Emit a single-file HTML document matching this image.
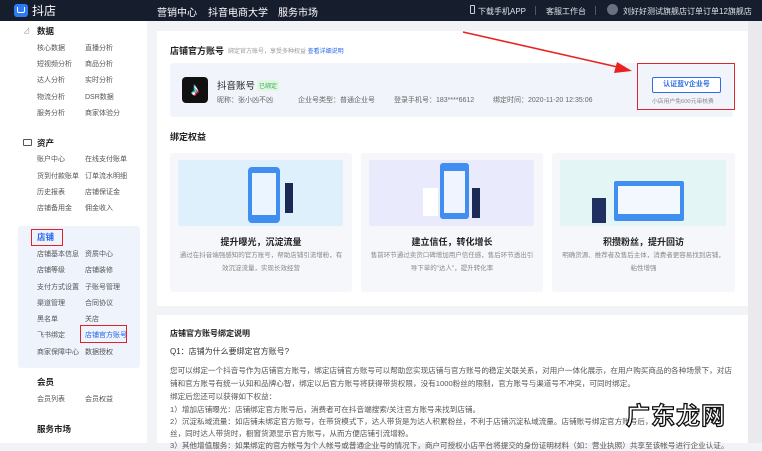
<!DOCTYPE html>
<html><head><meta charset="utf-8"><style>
*{margin:0;padding:0;box-sizing:border-box}
body{width:762px;height:443px;overflow:hidden;position:relative;background:#f2f3f6;font-family:"Liberation Sans","Noto Sans CJK SC",sans-serif;color:#333}
.a{position:absolute;white-space:nowrap}
.top{left:0;top:0;width:762px;height:21px;background:#161d2d}
.tw{color:#fff;font-size:10px;top:4px}
.tr{color:#dfe2ea;font-size:8px;top:6px}
.side{left:0;top:21px;width:147px;height:422px;background:#fff}
.si{font-size:7px;color:#555}
.sh{font-size:8.5px;font-weight:bold;color:#222}
.card{background:#fff}
.small{font-size:7px;color:#666}
.ben{background:#f6f7fa;border-radius:3px}
.img{border-radius:2px}
.bt{font-size:9px;font-weight:bold;color:#222;text-align:center;width:100%;left:0}
.bd{font-size:6.5px;color:#888;text-align:center;width:100%;left:0;line-height:13px;white-space:normal;padding:0 8px}
.tx{font-size:7.6px;color:#555}
</style></head><body>
<div class="a top"></div>
<div class="a" style="left:14px;top:4px;width:14px;height:13px;background:#2f7bf5;border-radius:3px"></div>
<div class="a" style="left:17px;top:7px;width:8px;height:6px;border:1.5px solid #fff;border-top:none;border-radius:0 0 2px 2px"></div>
<div class="a tw" style="left:32px;top:2px;font-size:12px">抖店</div>
<div class="a tw" style="left:157px">营销中心</div>
<div class="a tw" style="left:208px">抖音电商大学</div>
<div class="a tw" style="left:278px">服务市场</div>
<div class="a" style="left:470px;top:5px;width:5px;height:9px;border:1px solid #ccd;border-radius:1px"></div>
<div class="a tr" style="left:478px">下载手机APP</div>
<div class="a" style="left:535px;top:6px;width:1px;height:9px;background:#556"></div>
<div class="a tr" style="left:546px">客服工作台</div>
<div class="a" style="left:595px;top:6px;width:1px;height:9px;background:#556"></div>
<div class="a" style="left:607px;top:4px;width:11px;height:11px;border-radius:50%;background:#6a7080"></div>
<div class="a tr" style="left:623px">刘好好测试旗舰店订单订单12旗舰店</div>

<div class="a side"></div>
<div class="a" style="left:18px;top:226px;width:122px;height:142px;background:#eef3fc;border-radius:3px"></div>
<div class="a si" style="left:23px;top:26px;color:#999">⊿</div>
<div class="a sh" style="left:37px;top:25px">数据</div>
<div class="a si" style="left:37px;top:43px">核心数据</div><div class="a si" style="left:85px;top:43px">直播分析</div>
<div class="a si" style="left:37px;top:59px">短视频分析</div><div class="a si" style="left:85px;top:59px">商品分析</div>
<div class="a si" style="left:37px;top:75px">达人分析</div><div class="a si" style="left:85px;top:75px">实时分析</div>
<div class="a si" style="left:37px;top:92px">物流分析</div><div class="a si" style="left:85px;top:92px">DSR数据</div>
<div class="a si" style="left:37px;top:108px">服务分析</div><div class="a si" style="left:85px;top:108px">商家体验分</div>
<div class="a" style="left:23px;top:139px;width:9px;height:7px;border:1px solid #555;border-radius:1px"></div>
<div class="a sh" style="left:37px;top:137px">资产</div>
<div class="a si" style="left:37px;top:154px">账户中心</div><div class="a si" style="left:85px;top:154px">在线支付账单</div>
<div class="a si" style="left:37px;top:171px">货到付款账单</div><div class="a si" style="left:85px;top:171px">订单流水明细</div>
<div class="a si" style="left:37px;top:187px">历史报表</div><div class="a si" style="left:85px;top:187px">店铺保证金</div>
<div class="a si" style="left:37px;top:203px">店铺备用金</div><div class="a si" style="left:85px;top:203px">佣金收入</div>
<div class="a sh" style="left:37px;top:231px;color:#2566e8">店铺</div>
<div class="a" style="left:31px;top:229px;width:32px;height:17px;border:1.5px solid #e0232a"></div>
<div class="a si" style="left:37px;top:249px">店铺基本信息</div><div class="a si" style="left:85px;top:249px">资质中心</div>
<div class="a si" style="left:37px;top:265px">店铺等级</div><div class="a si" style="left:85px;top:265px">店铺装修</div>
<div class="a si" style="left:37px;top:282px">支付方式设置</div><div class="a si" style="left:85px;top:282px">子账号管理</div>
<div class="a si" style="left:37px;top:298px">渠道管理</div><div class="a si" style="left:85px;top:298px">合同协议</div>
<div class="a si" style="left:37px;top:314px">黑名单</div><div class="a si" style="left:85px;top:314px">关店</div>
<div class="a si" style="left:37px;top:330px">飞书绑定</div><div class="a si" style="left:85px;top:330px;color:#2566e8">店铺官方账号</div>
<div class="a" style="left:80px;top:325px;width:47px;height:18px;border:1.5px solid #e0232a"></div>
<div class="a si" style="left:37px;top:347px">商家保障中心</div><div class="a si" style="left:85px;top:347px">数据授权</div>
<div class="a sh" style="left:37px;top:376px">会员</div>
<div class="a si" style="left:37px;top:394px">会员列表</div><div class="a si" style="left:85px;top:394px">会员权益</div>
<div class="a sh" style="left:37px;top:423px">服务市场</div>

<div class="a" style="left:748px;top:21px;width:14px;height:422px;background:#e9e9ee"></div>
<div class="a card" style="left:157px;top:31px;width:591px;height:275px"></div>
<div class="a card" style="left:157px;top:315px;width:591px;height:128px"></div>
<div class="a" style="left:170px;top:44px;font-size:9px;font-weight:bold;color:#222">店铺官方账号</div>
<div class="a small" style="left:228px;top:46px;font-size:6px;color:#999">绑定官方账号，享受多种权益 <span style="color:#2566e8">查看详细说明</span></div>
<div class="a" style="left:170px;top:63px;width:563px;height:54px;background:#f1f4fb;border-radius:3px"></div>
<div class="a" style="left:182px;top:77px;width:26px;height:26px;background:#111;border-radius:4px;color:#fff;font-size:17px;text-align:center;line-height:26px;text-shadow:-1px -1px 0 #25f4ee,1px 1px 0 #fe2c55">♪</div>
<div class="a" style="left:217px;top:78px;font-size:9.5px;color:#222">抖音账号</div>
<div class="a" style="left:257px;top:80px;font-size:6px;color:#2cb34a;background:#e3f6e6;padding:1px 2px">已绑定</div>
<div class="a small" style="left:217px;top:95px">昵称：张小凶不凶</div>
<div class="a small" style="left:298px;top:95px">企业号类型：普通企业号</div>
<div class="a small" style="left:394px;top:95px">登录手机号：183****6612</div>
<div class="a small" style="left:493px;top:95px">绑定时间：2020-11-20 12:35:06</div>
<div class="a" style="left:637px;top:63px;width:98px;height:47px;border:1.5px solid #d9272e"></div>
<div class="a" style="left:652px;top:77px;width:69px;height:16px;border:1px solid #2f6de6;border-radius:2px;background:#fff;color:#2f6de6;font-size:7px;font-weight:bold;text-align:center;line-height:14px">认证蓝V企业号</div>
<div class="a" style="left:652px;top:96px;font-size:5.8px;color:#888">小店用户免600元审核费</div>
<svg class="a" style="left:0;top:0" width="762" height="443"><line x1="463" y1="32" x2="622" y2="68" stroke="#e8231f" stroke-width="1.6"/><polygon points="632,71 617,62 614,73" fill="#e8231f"/></svg>
<div class="a" style="left:170px;top:130px;font-size:9px;font-weight:bold;color:#222">绑定权益</div>

<div class="a ben" style="left:170px;top:153px;width:182px;height:139px">
<div class="a img" style="left:8px;top:7px;width:165px;height:66px;background:#def0fc"></div>
<div class="a" style="left:78px;top:14px;width:32px;height:56px;background:#3f8ef0;border-radius:4px"></div>
<div class="a" style="left:82px;top:20px;width:24px;height:42px;background:#eaf5ff"></div>
<div class="a" style="left:115px;top:30px;width:8px;height:30px;background:#1b2a55"></div>
<div class="a bt" style="top:82px">提升曝光，沉淀流量</div>
<div class="a bd" style="top:96px">通过在抖音端强感知的官方账号，帮助店铺引流增粉，有效沉淀流量，实现长效经营</div>
</div>
<div class="a ben" style="left:361px;top:153px;width:182px;height:139px">
<div class="a img" style="left:8px;top:7px;width:165px;height:66px;background:#e9eafb"></div>
<div class="a" style="left:79px;top:10px;width:29px;height:56px;background:#3f8ef0;border-radius:3px"></div>
<div class="a" style="left:83px;top:18px;width:21px;height:42px;background:#f0f4ff"></div>
<div class="a" style="left:62px;top:35px;width:15px;height:28px;background:#fff"></div>
<div class="a" style="left:111px;top:35px;width:8px;height:30px;background:#1b2a55"></div>
<div class="a bt" style="top:82px">建立信任，转化增长</div>
<div class="a bd" style="top:96px">售前环节通过卖货口碑增加用户信任感，售后环节透出引导下单的"达人"，提升转化率</div>
</div>
<div class="a ben" style="left:552px;top:153px;width:183px;height:139px">
<div class="a img" style="left:8px;top:7px;width:166px;height:66px;background:#e3f5f5"></div>
<div class="a" style="left:62px;top:28px;width:70px;height:40px;background:#3f8ef0;border-radius:2px"></div>
<div class="a" style="left:66px;top:33px;width:62px;height:28px;background:#f3f8ff"></div>
<div class="a" style="left:40px;top:45px;width:14px;height:25px;background:#203060"></div>
<div class="a bt" style="top:82px">积攒粉丝，提升回访</div>
<div class="a bd" style="top:96px">明确货源、推荐者及售后主体，消费者更容易找到店铺，粘性增强</div>
</div>

<div class="a" style="left:170px;top:328px;font-size:8px;font-weight:bold;color:#222">店铺官方账号绑定说明</div>
<div class="a" style="left:170px;top:346px;font-size:8px;color:#333">Q1：店铺为什么要绑定官方账号?</div>
<div class="a tx" style="left:170px;top:365px">您可以绑定一个抖音号作为店铺官方账号，绑定店铺官方账号可以帮助您实现店铺与官方账号的稳定关联关系，对用户一体化展示，在用户购买商品的各种场景下，对店</div>
<div class="a tx" style="left:170px;top:378px">铺和官方账号有统一认知和品牌心智，绑定以后官方账号将获得带货权限，没有1000粉丝的限制，官方账号与渠道号不冲突，可同时绑定。</div>
<div class="a tx" style="left:170px;top:391px">绑定后您还可以获得如下权益：</div>
<div class="a tx" style="left:170px;top:404px">1）增加店铺曝光：店铺绑定官方账号后，消费者可在抖音端搜索/关注官方账号来找到店铺。</div>
<div class="a tx" style="left:170px;top:416px">2）沉淀私域流量：如店铺未绑定官方账号，在带货模式下，达人带货是为达人积累粉丝，不利于店铺沉淀私域流量。店铺账号绑定官方账号后，</div>
<div class="a tx" style="left:170px;top:428px">丝，同时达人带货时，橱窗货源显示官方账号，从而方便店铺引流增粉。</div>
<div class="a tx" style="left:170px;top:440px">3）其他增值服务：如果绑定的官方帐号为个人帐号或普通企业号的情况下，商户可授权小店平台将提交的身份证明材料（如：营业执照）共享至该帐号进行企业认证。</div>
<div class="a" style="left:626px;top:396px;font-size:24px;font-weight:bold;color:#fff;letter-spacing:1px;-webkit-text-stroke:1.3px #111">广东龙网</div>
</body></html>
